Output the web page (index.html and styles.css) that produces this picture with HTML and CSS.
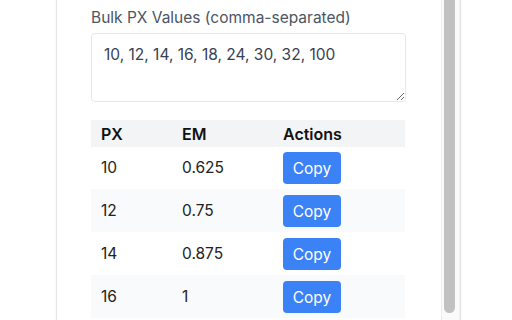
FILE: index.html
```html
<!DOCTYPE html>
<html>
<head>
<meta charset="utf-8">
<link rel="stylesheet" href="styles.css">
</head>
<body>
<div class="panel">
  <div class="content">
    <label class="label" for="bulk">Bulk PX Values (comma-separated)</label>
    <textarea id="bulk" class="bulk">10, 12, 14, 16, 18, 24, 30, 32, 100</textarea>
    <table class="results">
      <thead>
        <tr><th class="c-px">PX</th><th class="c-em">EM</th><th class="c-act">Actions</th></tr>
      </thead>
      <tbody>
        <tr><td>10</td><td>0.625</td><td><button class="copy">Copy</button></td></tr>
        <tr><td>12</td><td>0.75</td><td><button class="copy">Copy</button></td></tr>
        <tr><td>14</td><td>0.875</td><td><button class="copy">Copy</button></td></tr>
        <tr><td>16</td><td>1</td><td><button class="copy">Copy</button></td></tr>
      </tbody>
    </table>
  </div>
  <div class="scrollbar"><div class="thumb"></div></div>
</div>
</body>
</html>
```

FILE: styles.css
```css
html, body {
  margin: 0;
  padding: 0;
  background: #ffffff;
  height: 320px;
  overflow: hidden;
}

.panel {
  margin-left: 56px;
  width: 403px;
  height: 320px;
  display: flex;
  border-left: 1px solid #e6e6e6;
  border-right: 1px solid #e6e6e6;
  box-shadow: 0 0 3px rgba(0, 0, 0, 0.06);
  background: #fff;
  font-family: Inter, "Liberation Sans", sans-serif;
}

.content {
  flex: 1;
  padding: 7px 35px 0 34px;
}

.label {
  display: block;
  font-size: 15.5px;
  line-height: 21px;
  color: #4b5563;
  margin-bottom: 5px;
}

.bulk {
  display: block;
  box-sizing: border-box;
  width: 315px;
  height: 69px;
  margin: 0;
  padding: 10px 12px;
  border: 1px solid #e5e7eb;
  border-radius: 4px;
  font-family: Inter, "Liberation Sans", sans-serif;
  font-size: 15.5px;
  line-height: 21px;
  color: #374151;
  resize: vertical;
  outline: none;
}

.results {
  margin-top: 18px;
  width: 314px;
  border-collapse: collapse;
  font-size: 15.5px;
  color: #222;
}

.results th {
  background: #f3f4f6;
  text-align: left;
  font-weight: 600;
  font-size: 16px;
  color: #111;
  padding: 4px 10px 3px;
  line-height: 20px;
}

.c-px { width: 61px; }
.c-em { width: 81px; }

.results td {
  padding: 5px 10px 5px;
  line-height: 20px;
}

.results tbody tr:nth-child(even) td {
  background: #f9fafb;
}

.results tbody tr + tr td {
  padding-top: 6px;
}

.copy {
  display: block;
  width: 58px;
  height: 32px;
  border: none;
  border-radius: 4px;
  background: #3b82f6;
  color: #fff;
  font-family: Inter, "Liberation Sans", sans-serif;
  font-size: 15.5px;
  padding: 0;
}

.scrollbar {
  width: 15px;
  border-left: 1px solid #ececec;
  border-right: 1px solid #f0f0f0;
  background: #fafafa;
  padding-left: 2px;
}

.thumb {
  width: 11px;
  height: 313px;
  background: #c1c1c1;
  border-radius: 0 0 6px 6px;
}
```
